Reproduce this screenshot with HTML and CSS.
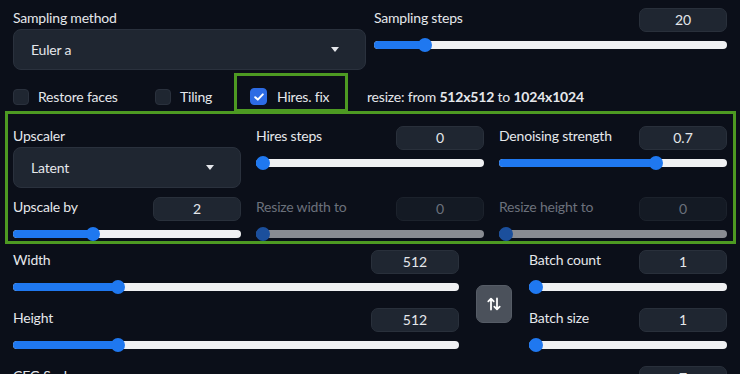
FILE: index.html
```html
<!DOCTYPE html>
<html lang="en">
<head>
    <meta charset="UTF-8">
    <meta name="viewport" content="width=device-width, initial-scale=1.0">
    <title>txt2img settings</title>
    <link rel="stylesheet" href="styles.css">
</head>
<body>
    <div class="page">
        <div class="top">
            <div class="col">
                <span class="lbl">Sampling method</span>
                <div class="dropdown"><span>Euler a</span><span class="caret"></span></div>
            </div>
            <div class="col">
                <div class="field">
                    <div class="field-head"><span class="lbl">Sampling steps</span><span class="num">20</span></div>
                    <div class="slider" style="--p:0.13"><div class="track"><div class="fill"></div></div><div class="thumb"></div></div>
                </div>
            </div>
        </div>

        <div class="checks">
            <div class="check restore"><span class="box"></span><span>Restore faces</span></div>
            <div class="check tiling"><span class="box"></span><span>Tiling</span></div>
            <div class="check hires">
                <span class="box on">
                    <svg width="10" height="8" viewBox="0 0 10 8"><path d="M1.2 4.2 L3.8 6.6 L8.8 1.4" fill="none" stroke="#fff" stroke-width="2" stroke-linecap="round" stroke-linejoin="round"/></svg>
                </span>
                <span>Hires. fix</span>
            </div>
            <div class="resize">resize: from <b>512x512</b> to <b>1024x1024</b></div>
        </div>

        <div class="hires-box">
            <div class="col">
                <span class="lbl">Upscaler</span>
                <div class="dropdown small"><span>Latent</span><span class="caret"></span></div>
            </div>
            <div class="field">
                <div class="field-head"><span class="lbl">Hires steps</span><span class="num">0</span></div>
                <div class="slider" style="--p:0"><div class="track"><div class="fill"></div></div><div class="thumb"></div></div>
            </div>
            <div class="field">
                <div class="field-head"><span class="lbl">Denoising strength</span><span class="num">0.7</span></div>
                <div class="slider" style="--p:0.7"><div class="track"><div class="fill"></div></div><div class="thumb"></div></div>
            </div>
            <div class="field">
                <div class="field-head"><span class="lbl">Upscale by</span><span class="num">2</span></div>
                <div class="slider" style="--p:0.34"><div class="track"><div class="fill"></div></div><div class="thumb"></div></div>
            </div>
            <div class="field disabled">
                <div class="field-head"><span class="lbl">Resize width to</span><span class="num">0</span></div>
                <div class="slider" style="--p:0"><div class="track"><div class="fill"></div></div><div class="thumb"></div></div>
            </div>
            <div class="field disabled">
                <div class="field-head"><span class="lbl">Resize height to</span><span class="num">0</span></div>
                <div class="slider" style="--p:0"><div class="track"><div class="fill"></div></div><div class="thumb"></div></div>
            </div>
        </div>

        <div class="dims">
            <div class="stack wide">
                <div class="field">
                    <div class="field-head"><span class="lbl">Width</span><span class="num">512</span></div>
                    <div class="slider" style="--p:0.227"><div class="track"><div class="fill"></div></div><div class="thumb"></div></div>
                </div>
                <div class="field">
                    <div class="field-head"><span class="lbl">Height</span><span class="num">512</span></div>
                    <div class="slider" style="--p:0.227"><div class="track"><div class="fill"></div></div><div class="thumb"></div></div>
                </div>
            </div>
            <button class="swap" title="Swap width and height">
                <svg width="14" height="14" viewBox="0 0 14 14">
                    <path d="M4 12.5 V1.8 M1.3 4.4 L4 1.6 L6.7 4.4" fill="none" stroke="#fff" stroke-width="1.8" stroke-linecap="round" stroke-linejoin="round"/>
                    <path d="M10 1.5 V12.2 M7.3 9.6 L10 12.4 L12.7 9.6" fill="none" stroke="#fff" stroke-width="1.8" stroke-linecap="round" stroke-linejoin="round"/>
                </svg>
            </button>
            <div class="stack narrow">
                <div class="field">
                    <div class="field-head"><span class="lbl">Batch count</span><span class="num">1</span></div>
                    <div class="slider" style="--p:0"><div class="track"><div class="fill"></div></div><div class="thumb"></div></div>
                </div>
                <div class="field">
                    <div class="field-head"><span class="lbl">Batch size</span><span class="num">1</span></div>
                    <div class="slider" style="--p:0"><div class="track"><div class="fill"></div></div><div class="thumb"></div></div>
                </div>
            </div>
        </div>

        <div class="field cfg">
            <div class="field-head"><span class="lbl">CFG Scale</span><span class="num">7</span></div>
            <div class="slider" style="--p:0.2"><div class="track"><div class="fill"></div></div><div class="thumb"></div></div>
        </div>
    </div>
</body>
</html>
```

FILE: styles.css
```css
body {
    margin: 0;
    background: #0b0f19;
    color: #e5e7eb;
    font-family: Lato, "Noto Sans", sans-serif;
    font-size: 14px;
    letter-spacing: -0.2px;
    overflow: hidden;
}

.page {
    padding: 8px 13px 0;
}

.top {
    display: flex;
    gap: 8px;
}

.top > .col {
    flex: 1;
}

.lbl {
    display: block;
    line-height: 20px;
    white-space: nowrap;
}

.dropdown {
    margin-top: 1px;
    height: 41px;
    box-sizing: border-box;
    background: #1f2631;
    border: 1px solid #2a313d;
    border-radius: 8px;
    display: flex;
    align-items: center;
    justify-content: space-between;
    padding: 0 26px 0 17px;
}

.caret {
    width: 0;
    height: 0;
    border-left: 4.5px solid transparent;
    border-right: 4.5px solid transparent;
    border-top: 5px solid #e5e7eb;
}

/* slider fields */
.field {
    height: 44px;
}

.field-head {
    display: flex;
    justify-content: space-between;
    align-items: flex-start;
    height: 24px;
}

.num {
    width: 88px;
    height: 24px;
    box-sizing: border-box;
    background: #1f2631;
    border: 1px solid #29303b;
    border-radius: 7px;
    text-align: center;
    line-height: 22px;
    font-size: 14px;
    letter-spacing: 0;
}

.slider {
    position: relative;
    height: 14px;
    margin-top: 6px;
}

.track {
    position: absolute;
    left: 0;
    right: 0;
    top: 3px;
    height: 8px;
    border-radius: 4px;
    background: #f0f1f3;
    overflow: hidden;
}

.fill {
    height: 100%;
    width: calc((100% - 14px) * var(--p) + 7px);
    background: #1f78f0;
}

.thumb {
    position: absolute;
    top: 0;
    left: calc((100% - 14px) * var(--p));
    width: 14px;
    height: 14px;
    border-radius: 50%;
    background: #1f78f0;
}

.disabled .lbl {
    color: #6b717c;
}

.disabled .num {
    background: #141a24;
    border-color: #1c222c;
    color: #6b717c;
}

.disabled .track {
    background: #898c92;
}

.disabled .fill,
.disabled .thumb {
    background: #1b4f9c;
}

/* checkbox row */
.checks {
    display: flex;
    align-items: center;
    height: 39px;
    margin-top: 3px;
    white-space: nowrap;
}

.check,
.resize {
    display: flex;
    align-items: center;
    gap: 9px;
    margin-top: 8px;
}

.restore {
    width: 142px;
}

.tiling {
    width: 79px;
}

.hires {
    width: 114px;
    height: 39px;
    box-sizing: border-box;
    margin-top: 0;
    border: 3px solid #4d9a22;
    padding: 8px 13px 0;
    gap: 10px;
}

.box {
    width: 16px;
    height: 16px;
    border-radius: 4px;
    background: #1f2631;
    border: 1px solid #2a313d;
    box-sizing: border-box;
    display: flex;
    align-items: center;
    justify-content: center;
}

.box.on {
    width: 17px;
    height: 17px;
    background: #2d6be4;
    border-color: #2d6be4;
}

.resize {
    display: block;
    margin-left: 19px;
}

.resize b {
    font-weight: 700;
}

/* hires fix options */
.hires-box {
    margin: -1px -9px 0 -8px;
    border: 3px solid #4d9a22;
    padding: 12px 6px 0 5px;
    display: grid;
    grid-template-columns: repeat(3, 1fr);
    column-gap: 15px;
    row-gap: 9px;
}

/* width / height / batch */
.dims {
    display: flex;
    margin-top: 6px;
}

.stack {
    display: flex;
    flex-direction: column;
    gap: 14px;
}

.wide {
    flex: 1;
}

.narrow {
    width: 198px;
}

.swap {
    width: 36px;
    height: 38px;
    margin: 35px 17px 0;
    background: #4b515b;
    border: 1px solid #565c66;
    border-radius: 7px;
    display: flex;
    align-items: center;
    justify-content: center;
    padding: 0;
}

.cfg {
    margin-top: 14px;
}
```
